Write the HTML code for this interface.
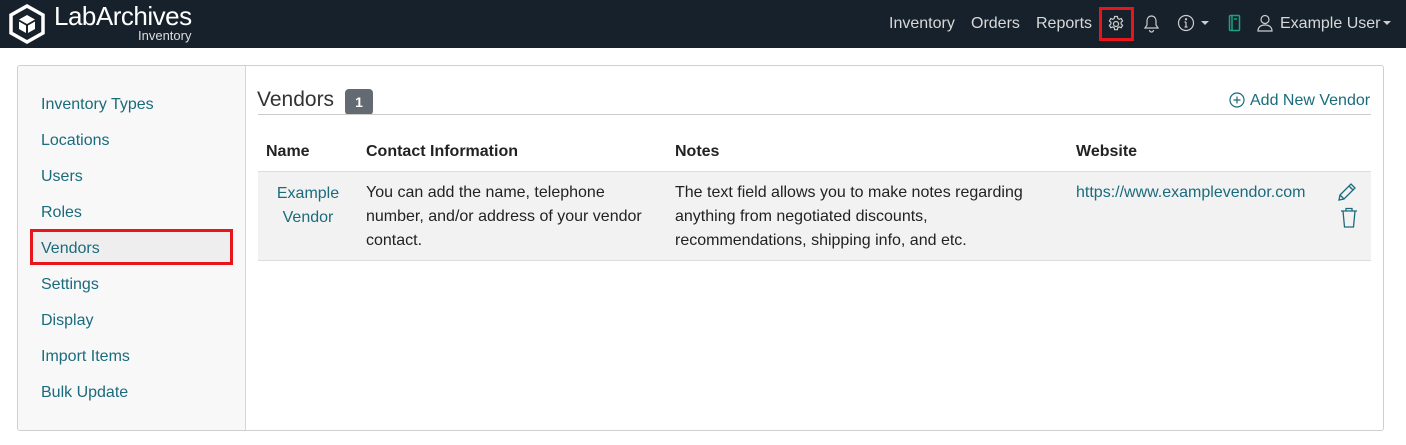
<!DOCTYPE html>
<html><head><style>
*{box-sizing:border-box;margin:0;padding:0}
body{width:1406px;height:445px;background:#fff;font-family:"Liberation Sans",Arial,sans-serif;position:relative;overflow:hidden;color:#222}
.nav{position:absolute;left:0;top:0;width:1406px;height:48px;background:#17212b}
.nav .t{position:absolute;top:15px;font-size:16px;color:#d8d8d8}
.card{position:absolute;left:17px;top:65px;width:1367px;height:366px;border:1px solid #cfcfcf;border-radius:3px;overflow:hidden}
.side{position:absolute;left:0;top:0;width:228px;height:100%;background:#f8f8f8;border-right:1px solid #d6d6d6}
.side a{position:absolute;left:23px;font-size:16px;color:#1a6b7c;text-decoration:none}
.a{color:#1a6b7c}
.abs{position:absolute}
</style></head><body>
<div class="nav">
<svg class="abs" style="left:8px;top:4px" width="38" height="40" viewBox="0 0 38 40"><path d="M19 2 L35 11 L35 29 L19 38 L3 29 L3 11 Z" fill="none" stroke="#fff" stroke-width="3.5"/><path d="M19 11 L27 15.5 L19 20 L11 15.5 Z M11 17.5 L18 21.5 L18 29 L11 25 Z M27 17.5 L20 21.5 L20 29 L27 25 Z" fill="#fff"/></svg>
<div class="abs" style="left:54px;top:1px;font-size:26px;color:#fff;letter-spacing:-0.5px">LabArchives</div>
<div class="abs" style="left:138px;top:28px;font-size:13px;color:#ddd">Inventory</div>
<div class="t" style="left:889px">Inventory</div>
<div class="t" style="left:971px">Orders</div>
<div class="t" style="left:1036px">Reports</div>
<div class="abs" style="left:1099px;top:7px;width:35px;height:34px;border:3px solid #e8161b"></div>
<svg class="abs" style="left:1107px;top:15px" width="18" height="18" viewBox="0 0 18 18" fill="none" stroke="#ccc" stroke-width="1.2"><circle cx="9" cy="9" r="2.5"/><path d="M7.6 1.5h2.8l.4 2 1.5.8 1.9-.8 1.4 2.4-1.5 1.4v1.6l1.5 1.4-1.4 2.4-1.9-.8-1.5.8-.4 2H7.6l-.4-2-1.5-.8-1.9.8-1.4-2.4 1.5-1.4V7.3L2.4 5.9l1.4-2.4 1.9.8 1.5-.8z"/></svg>
<svg class="abs" style="left:1143px;top:14px" width="17" height="19" viewBox="0 0 17 19" fill="none" stroke="#ccc" stroke-width="1.2"><path d="M8.5 2c-3 0-4.5 2.5-4.5 5v4l-2 3h13l-2-3V7c0-2.5-1.5-5-4.5-5zM6.5 16a2 2 0 004 0"/></svg>
<svg class="abs" style="left:1177px;top:14px" width="18" height="18" viewBox="0 0 18 18" fill="none" stroke="#ccc" stroke-width="1.2"><circle cx="9" cy="9" r="7.5"/><path d="M9 8v5M7.5 13h3M7.5 8H9"/><circle cx="9" cy="5.3" r=".6" fill="#ccc"/></svg>
<div class="abs" style="left:1201px;top:21px;border:4px solid transparent;border-top:4px solid #ccc;border-bottom:0"></div>
<svg class="abs" style="left:1228px;top:14px" width="13" height="18" viewBox="0 0 13 18" fill="none" stroke="#19a37f" stroke-width="1.5"><rect x="1.5" y="1.5" width="10" height="15" rx="1"/><path d="M4 1.5v15M6 5h3"/></svg>
<svg class="abs" style="left:1257px;top:14px" width="16" height="18" viewBox="0 0 16 18" fill="none" stroke="#ccc" stroke-width="1.2"><circle cx="8" cy="5.5" r="4"/><path d="M1 17c0-4 3-6 7-6s7 2 7 6z"/></svg>
<div class="t" style="left:1280px">Example User</div>
<div class="abs" style="left:1383px;top:21px;border:4px solid transparent;border-top:4px solid #ccc;border-bottom:0"></div>
</div>
<div class="card">
<div class="side">
<a style="top:30px">Inventory Types</a>
<a style="top:66px">Locations</a>
<a style="top:102px">Users</a>
<a style="top:138px">Roles</a>
<div class="abs" style="left:12px;top:163px;width:203px;height:36px;background:#eee;border:3px solid #e8161b"></div>
<a style="top:174px">Vendors</a>
<a style="top:210px">Settings</a>
<a style="top:246px">Display</a>
<a style="top:282px">Import Items</a>
<a style="top:318px">Bulk Update</a>
</div>
<div class="abs" style="left:239px;top:22px;font-size:21px;color:#333">Vendors</div>
<div class="abs" style="left:327px;top:23px;width:28px;height:26px;background:#636a71;border-radius:4px;color:#fff;font-size:14px;font-weight:bold;text-align:center;line-height:26px">1</div>
<svg class="abs" style="left:1211px;top:26px" width="16" height="16" viewBox="0 0 16 16" fill="none" stroke="#1a6b7c" stroke-width="1.2"><circle cx="8" cy="8" r="7"/><path d="M8 4.5v7M4.5 8h7"/></svg>
<div class="abs a" style="left:1232px;top:26px;font-size:16px">Add New Vendor</div>
<div class="abs" style="left:240px;top:48px;width:1113px;border-top:1px solid #ccc"></div>
<div class="abs" style="left:248px;top:77px;font-size:16px;font-weight:bold">Name</div>
<div class="abs" style="left:348px;top:77px;font-size:16px;font-weight:bold">Contact Information</div>
<div class="abs" style="left:657px;top:77px;font-size:16px;font-weight:bold">Notes</div>
<div class="abs" style="left:1058px;top:77px;font-size:16px;font-weight:bold">Website</div>
<div class="abs" style="left:240px;top:105px;width:1113px;height:90px;background:#f2f2f2;border-top:1px solid #ddd;border-bottom:1px solid #ddd"></div>
<div class="abs a" style="left:248px;top:116px;width:84px;text-align:center;font-size:16px;line-height:24px">Example Vendor</div>
<div class="abs" style="left:348px;top:115px;width:295px;font-size:16px;line-height:24px">You can add the name, telephone number, and/or address of your vendor contact.</div>
<div class="abs" style="left:657px;top:115px;width:380px;font-size:16px;line-height:24px">The text field allows you to make notes regarding anything from negotiated discounts, recommendations, shipping info, and etc.</div>
<div class="abs a" style="left:1058px;top:115px;font-size:16px;line-height:24px">https://www.examplevendor.com</div>
<svg class="abs" style="left:1319px;top:116px" width="20" height="20" viewBox="0 0 20 20" fill="none" stroke="#1a6b7c" stroke-width="1.3"><path d="M2 18l1-5L14 2l4 4L7 17zM12 4l4 4M3 13l4 4"/></svg>
<svg class="abs" style="left:1322px;top:141px" width="18" height="22" viewBox="0 0 18 22" fill="none" stroke="#1a6b7c" stroke-width="1.3"><path d="M1 4h16M6 4V1.5h6V4M3 4l1.5 16h9L15 4"/></svg>
</div>
</body></html>
